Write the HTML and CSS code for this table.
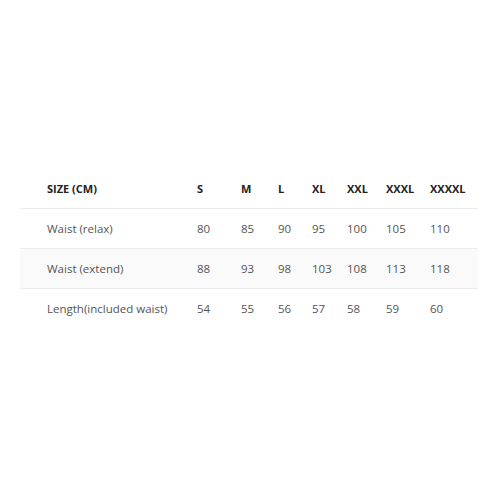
FILE: index.html
```html
<!DOCTYPE html>
<html>
<head>
<meta charset="utf-8">
<link rel="stylesheet" href="styles.css">
</head>
<body>
<table class="size-table">
  <colgroup>
    <col class="c-label"><col class="c-s"><col class="c-m"><col class="c-l"><col class="c-xl"><col class="c-xxl"><col class="c-xxxl"><col class="c-xxxxl">
  </colgroup>
  <thead>
    <tr><th>SIZE (CM)</th><th>S</th><th>M</th><th>L</th><th>XL</th><th>XXL</th><th>XXXL</th><th>XXXXL</th></tr>
  </thead>
  <tbody>
    <tr><td>Waist (relax)</td><td>80</td><td>85</td><td>90</td><td>95</td><td>100</td><td>105</td><td>110</td></tr>
    <tr class="alt"><td>Waist (extend)</td><td>88</td><td>93</td><td>98</td><td>103</td><td>108</td><td>113</td><td>118</td></tr>
    <tr><td>Length(included waist)</td><td>54</td><td>55</td><td>56</td><td>57</td><td>58</td><td>59</td><td>60</td></tr>
  </tbody>
</table>
</body>
</html>
```
FILE: styles.css
```css
html, body {
  margin: 0;
  padding: 0;
  background: #ffffff;
}
body {
  padding: 168px 22px 0 20px;
  font-family: "Open Sans", "Noto Sans", sans-serif;
}
.size-table {
  width: 458px;
  border-collapse: collapse;
  table-layout: fixed;
}
.c-label { width: 177px; }
.c-s { width: 44px; }
.c-m { width: 37px; }
.c-l { width: 34px; }
.c-xl { width: 35px; }
.c-xxl { width: 39px; }
.c-xxxl { width: 44px; }
.c-xxxxl { width: 48px; }
.size-table th,
.size-table td {
  padding: 0;
  text-align: left;
  vertical-align: middle;
  white-space: nowrap;
}
.size-table th {
  height: 40px;
}
.size-table td {
  height: 39px;
}
.size-table th:first-child,
.size-table td:first-child {
  padding-left: 27px;
}
.size-table th {
  font-size: 11px;
  font-weight: 700;
  color: #222;
}
.size-table td {
  font-size: 11.5px;
  color: #555;
}
.size-table tbody tr {
  border-top: 1px solid #ececec;
}
.size-table tr.alt {
  background: #fafafa;
}
```
